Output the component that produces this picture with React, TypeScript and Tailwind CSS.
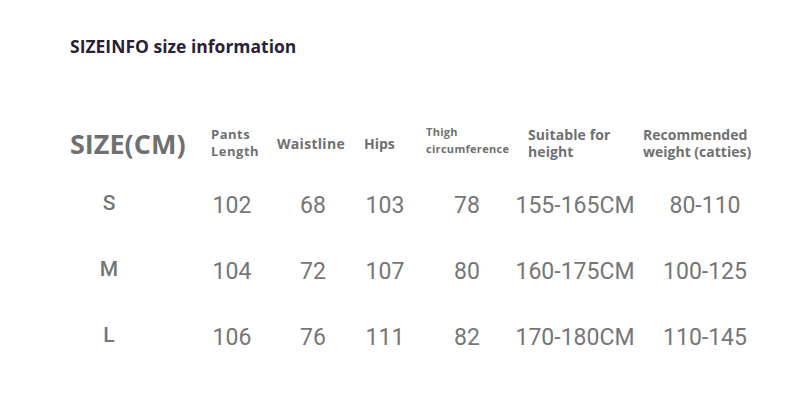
import React from "react";

const rows = [
  ["S", "102", "68", "103", "78", "155-165CM", "80-110"],
  ["M", "104", "72", "107", "80", "160-175CM", "100-125"],
  ["L", "106", "76", "111", "82", "170-180CM", "110-145"],
];

export default function App() {
  return (
    <div className="w-[797px] h-[417px] bg-white overflow-hidden" style={{ fontFamily: '"Open Sans", sans-serif' }}>
      <div className="pt-[34px] pl-[70px] text-[17.5px] leading-[24px] font-bold text-[#2a1f33]">
        SIZEINFO size information
      </div>
      <div className="mt-[56px] h-[58px] flex items-center pl-[70px] text-[#707070] font-bold">
        <div className="w-[141px] text-[27px] leading-none">SIZE(CM)</div>
        <div className="w-[66px] text-[13px] leading-[17px] tracking-[0.5px]">
          Pants
          <br />
          Length
        </div>
        <div className="w-[87px] text-[14px] leading-[17px] tracking-[0.3px]">Waistline</div>
        <div className="w-[62px] text-[14px] leading-[17px]">Hips</div>
        <div className="w-[102px] text-[11px] leading-[17px] tracking-[0.3px] -mt-[7px]">
          Thigh
          <br />
          circumference
        </div>
        <div className="w-[115px] text-[14px] leading-[17px] tracking-[0.1px]">
          Suitable for
          <br />
          height
        </div>
        <div className="text-[14px] leading-[17px] tracking-[0px]">
          Recommended
          <br />
          weight (catties)
        </div>
      </div>
      <div style={{ fontFamily: 'Roboto, sans-serif' }}>
        {rows.map((r) => (
          <div
            key={r[0]}
            className="pl-[38px] h-[66px] grid grid-cols-[142px_104px_58px_86px_78px_138px_122px] items-center text-[23px] text-[#767676]"
          >
            {r.map((c, i) => (
              <div
                key={i}
                className={"flex justify-center whitespace-nowrap " + (i === 0 ? "text-[21px] font-medium -mt-[2px]" : "mt-[2px]")}
              >
                {c}
              </div>
            ))}
          </div>
        ))}
      </div>
    </div>
  );
}
